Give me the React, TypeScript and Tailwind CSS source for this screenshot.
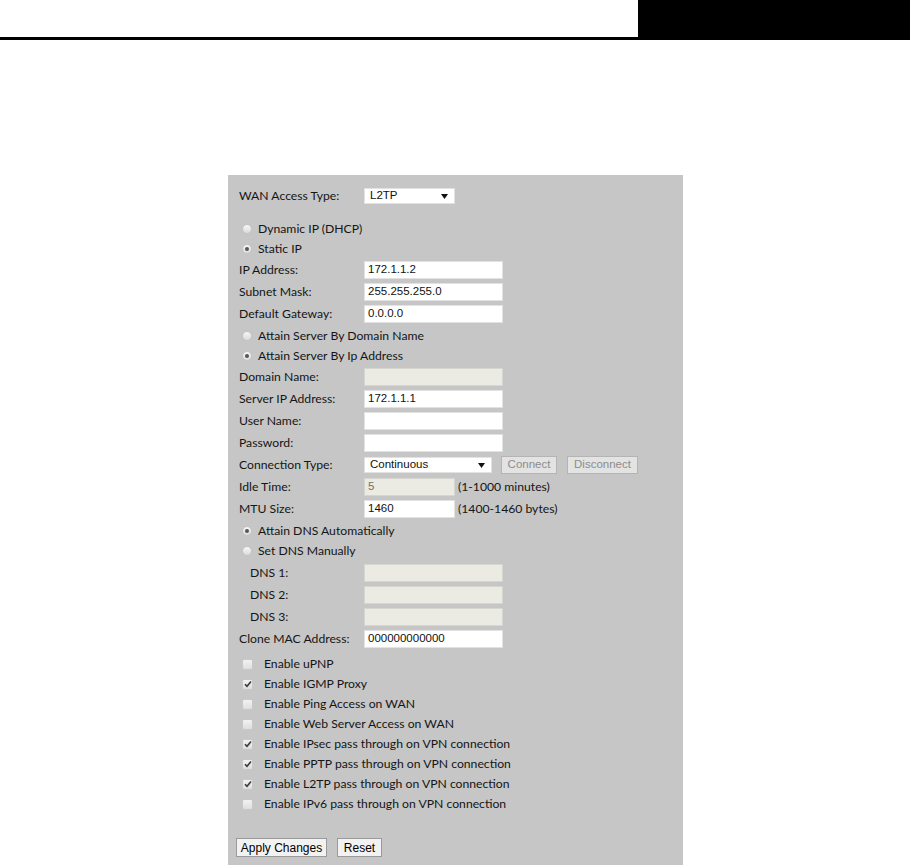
import type { ReactNode } from 'react'

const label = "font-['Lato',sans-serif] text-[12.2px] text-[#151515]"
const field = "font-['Liberation_Sans',Arial,sans-serif] text-[11.5px]"

function Radio({ on, text }: { on?: boolean; text: string }) {
  return (
    <div className="flex h-[20px] items-center pl-[3px]">
      <span className="flex h-[10px] w-[10px] items-center justify-center rounded-full border border-[#c4c4c4] bg-gradient-to-b from-[#f6f6f6] to-[#dcdcdc]">
        {on && <span className="h-[4px] w-[4px] rounded-full bg-[#555]" />}
      </span>
      <span className={`${label} ml-[6px]`}>{text}</span>
    </div>
  )
}

function Check({ on, text }: { on?: boolean; text: string }) {
  return (
    <div className="flex h-[20px] items-center pl-[3px]">
      <span className="flex h-[11px] w-[11px] items-center justify-center rounded-[2px] border border-[#c8c8c8] bg-gradient-to-b from-[#f2f2f2] to-[#dedede]">
        {on && (
          <svg width="8" height="8" viewBox="0 0 8 8">
            <path d="M1 4.2 L3 6.3 L7 1.5" fill="none" stroke="#3a3a3a" strokeWidth="1.6" />
          </svg>
        )}
      </span>
      <span className={`${label} ml-[11px]`}>{text}</span>
    </div>
  )
}

function Input({ value = '', disabled, w = 'w-[139px]' }: { value?: string; disabled?: boolean; w?: string }) {
  return (
    <div
      className={`${w} ${field} flex h-[18px] items-center border px-[3px] ${
        disabled ? 'border-[#d6d6d0] bg-[#ebebe4] text-[#707070]' : 'border-[#e2e2e2] bg-white text-[#111]'
      }`}
    >
      {value}
    </div>
  )
}

function Row({ name, indent, children }: { name: string; indent?: boolean; children: ReactNode }) {
  return (
    <div className="flex h-[22px] items-center">
      <div className={`${label} w-[125px] ${indent ? 'pl-[11px]' : ''}`}>{name}</div>
      {children}
    </div>
  )
}

function Arrow() {
  return (
    <svg width="7" height="5" viewBox="0 0 7 5">
      <path d="M0 0 H7 L3.5 5 Z" fill="#111" />
    </svg>
  )
}

function Select({ value, w }: { value: string; w: string }) {
  return (
    <div className={`${w} ${field} flex h-[16px] items-center justify-between border border-[#e2e2e2] bg-white pl-[5px] pr-[6px] text-[#111]`}>
      <span>{value}</span>
      <Arrow />
    </div>
  )
}

function GrayBtn({ text, w }: { text: string; w: string }) {
  return (
    <div className={`${w} ${field} flex h-[18px] items-center justify-center border border-[#b4b4b4] bg-[#e3e3e3] text-[#8c8c8c]`}>
      {text}
    </div>
  )
}

function Btn({ text, w }: { text: string; w: string }) {
  return (
    <div className={`${w} font-['Liberation_Sans',Arial,sans-serif] text-[12px] flex h-[19px] items-center justify-center border border-[#9a9a9a] bg-[#f2f2f2] text-black`}>
      {text}
    </div>
  )
}

export default function App() {
  const checks: [string, boolean][] = [
    ['Enable uPNP', false],
    ['Enable IGMP Proxy', true],
    ['Enable Ping Access on WAN', false],
    ['Enable Web Server Access on WAN', false],
    ['Enable IPsec pass through on VPN connection', true],
    ['Enable PPTP pass through on VPN connection', true],
    ['Enable L2TP pass through on VPN connection', true],
    ['Enable IPv6 pass through on VPN connection', false],
  ]

  return (
    <div className="h-[865px] w-[910px] overflow-hidden bg-white">
      {/* header */}
      <div className="flex h-[40px]">
        <div className="flex w-[638px] flex-col justify-end">
          <div className="h-[3px] bg-black" />
        </div>
        <div className="flex-1 bg-black" />
      </div>

      {/* panel */}
      <div className="ml-[228px] mt-[135px] h-[690px] w-[455px] bg-[#c6c6c6] pl-[11px] pt-[10px]">
        <Row name="WAN Access Type:">
          <Select value="L2TP" w="w-[91px]" />
        </Row>

        <div className="mt-[12px]">
          <Radio text="Dynamic IP (DHCP)" />
          <Radio on text="Static IP" />
        </div>

        <Row name="IP Address:"><Input value="172.1.1.2" /></Row>
        <Row name="Subnet Mask:"><Input value="255.255.255.0" /></Row>
        <Row name="Default Gateway:"><Input value="0.0.0.0" /></Row>

        <div className="pt-[1px]">
          <Radio text="Attain Server By Domain Name" />
          <Radio on text="Attain Server By Ip Address" />
        </div>

        <Row name="Domain Name:"><Input disabled /></Row>
        <Row name="Server IP Address:"><Input value="172.1.1.1" /></Row>
        <Row name="User Name:"><Input /></Row>
        <Row name="Password:"><Input /></Row>
        <Row name="Connection Type:">
          <Select value="Continuous" w="w-[128px]" />
          <div className="ml-[9px] flex gap-[10px]">
            <GrayBtn text="Connect" w="w-[56px]" />
            <GrayBtn text="Disconnect" w="w-[71px]" />
          </div>
        </Row>
        <Row name="Idle Time:">
          <Input disabled value="5" w="w-[91px]" />
          <span className={`${label} ml-[3px]`}>(1-1000 minutes)</span>
        </Row>
        <Row name="MTU Size:">
          <Input value="1460" w="w-[91px]" />
          <span className={`${label} ml-[3px]`}>(1400-1460 bytes)</span>
        </Row>

        <div className="pt-[1px]">
          <Radio on text="Attain DNS Automatically" />
          <Radio text="Set DNS Manually" />
        </div>

        <div className="pt-[1px]">
          <Row name="DNS 1:" indent><Input disabled /></Row>
          <Row name="DNS 2:" indent><Input disabled /></Row>
          <Row name="DNS 3:" indent><Input disabled /></Row>
          <Row name="Clone MAC Address:"><Input value="000000000000" /></Row>
        </div>

        <div className="pt-[4px]">
          {checks.map(([t, on]) => (
            <Check key={t} on={on} text={t} />
          ))}
        </div>

        <div className="-ml-[3px] mt-[24px] flex gap-[10px]">
          <Btn text="Apply Changes" w="w-[91px]" />
          <Btn text="Reset" w="w-[45px]" />
        </div>
      </div>
    </div>
  )
}
